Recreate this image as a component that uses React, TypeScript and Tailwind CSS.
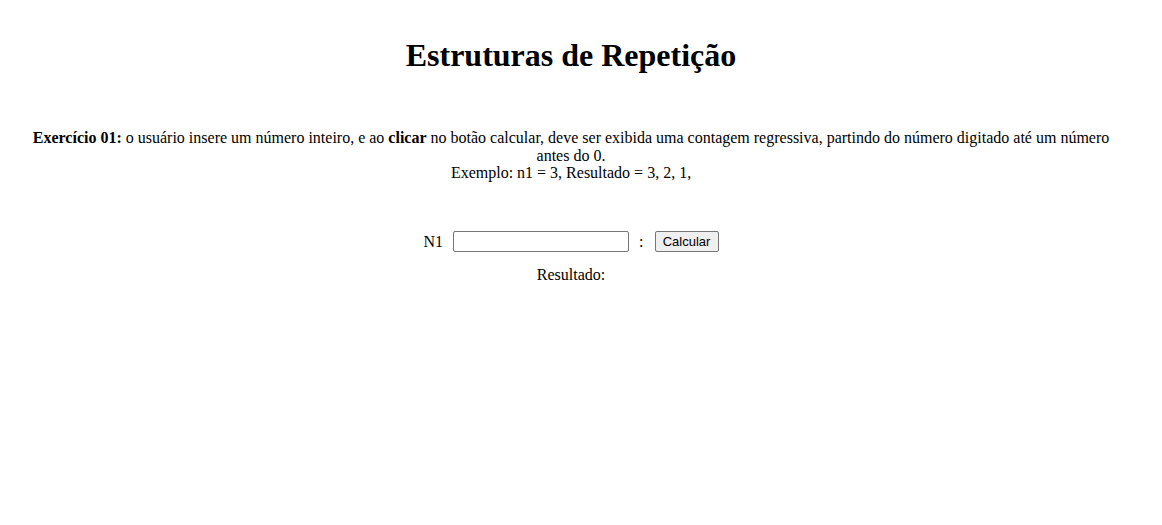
export default function App() {
  return (
    <div className="min-h-[525px] bg-white pt-2 pl-2 pr-[28px] font-['Liberation_Serif',serif] text-black">
      <h1 className="mt-[29px] mb-[21px] text-center text-[32px] leading-[37px] font-bold">
        Estruturas de Repetição
      </h1>
      <div className="mt-[55px] px-6 text-center text-base leading-[17.5px]">
        <p>
          <b>Exercício 01:</b> o usuário insere um número inteiro, e ao <b>clicar</b> no botão calcular, deve ser exibida uma contagem regressiva, partindo do número digitado até um número antes do 0.
        </p>
        <p>Exemplo: n1 = 3, Resultado = 3, 2, 1,</p>
      </div>
      <div className="mt-[48px] flex items-center justify-center text-base">
        <label className="mr-[10px]">N1</label>
        <input
          type="text"
          className="h-[21px] w-[176px] rounded-[2px] border border-[#767676] px-1"
        />
        <span className="ml-[10px] mr-[11px]">:</span>
        <button className="h-[21px] w-[64px] rounded-[2px] border border-[#767676] bg-[#efefef] font-['Liberation_Sans',sans-serif] text-[13px] leading-none">
          Calcular
        </button>
      </div>
      <p className="mt-[12px] text-center text-base leading-[18px]">Resultado:</p>
    </div>
  );
}
